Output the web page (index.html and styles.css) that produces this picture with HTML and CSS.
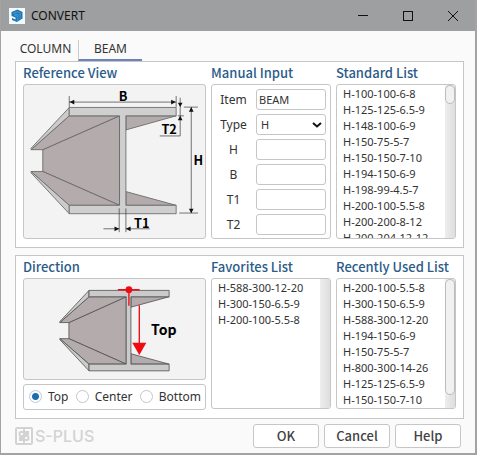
FILE: index.html
```html
<!DOCTYPE html>
<html lang="en">
<head>
<meta charset="utf-8">
<meta name="viewport" content="width=device-width, initial-scale=1">
<title>CONVERT</title>
<link rel="stylesheet" href="styles.css">
</head>
<body>
<div class="window">
  <header class="titlebar">
    <svg class="app-icon" viewBox="0 0 16 16" aria-hidden="true">
      <rect width="16" height="16" fill="#f4f9fc"/>
      <path d="M2.5 4 8.5 1.5 13.5 4V10.5L8 14 3 12V10L6.5 11.5V9.5L2.5 8Z" fill="#1c78b5"/>
      <path d="M4 5.5 8.5 3.8 11.2 5V10.5M5 7 8.8 8.5V13M6 5.8 10 7.4" fill="none" stroke="#6fb0d8" stroke-width=".6"/>
    </svg>
    <h1 class="window-title">CONVERT</h1>
    <button class="win-btn" type="button" aria-label="Minimize"><svg viewBox="0 0 12 12"><path d="M1 5.5H11" /></svg></button>
    <button class="win-btn" type="button" aria-label="Maximize"><svg viewBox="0 0 12 12"><rect x="1.5" y="1.5" width="9" height="9"/></svg></button>
    <button class="win-btn" type="button" aria-label="Close"><svg viewBox="0 0 12 12"><path d="M1 1 11 11M11 1 1 11"/></svg></button>
  </header>

  <main class="content">
    <nav class="tabs">
      <button class="tab" type="button">COLUMN</button>
      <button class="tab tab-active" type="button">BEAM</button>
    </nav>

    <section class="panel">
      <div class="column">
        <h2>Reference View</h2>
        <div class="box picture">
          <svg viewBox="27 30 540 457" role="img" aria-label="H beam dimensions">
            <g stroke="#666" stroke-width="2.5" stroke-linejoin="round">
              <path d="M83 223 312 122V389L83 288Z" fill="#b4abac"/>
              <path d="M162 122H312L83 223H48Z" fill="#b4abac"/>
              <path d="M162 389H312L83 288H48Z" fill="#b4abac"/>
              <path d="M162 97V122L48 223V219Z" fill="#cbcbcb"/>
              <path d="M162 414V389L48 288V292Z" fill="#cbcbcb"/>
              <path d="M331 122H481L331 164Z" fill="#b4abac"/>
              <path d="M331 389H481L331 348Z" fill="#b4abac"/>
              <path d="M162 97H481V122H331V389H481V414H162V389H312V122H162Z" fill="#cfcfcf"/>
            </g>
            <g stroke="#333" stroke-width="2" fill="none">
              <path d="M162 63V96M481 63V96M162 81H481M493 68V182H432M486 122H504M504 96H546M526 96V412M490 412H546M311 398V469M331 398V469M264 459H311M331 459H402"/>
            </g>
            <g fill="#111">
              <path d="M163 81 177 74V88ZM480 81 466 74V88ZM493 96 486 83H500ZM493 122 486 135H500ZM526 96 519 110H533ZM526 413 519 399H533ZM311 459 297 452V466ZM331 459 345 452V466Z"/>
            </g>
            <g class="dimension">
              <text x="310" y="78">B</text>
              <text x="437" y="175">T2</text>
              <text x="533" y="269">H</text>
              <text x="355" y="456">T1</text>
            </g>
          </svg>
        </div>
      </div>

      <div class="column">
        <h2>Manual Input</h2>
        <form class="box fields">
          <label for="item">Item</label><input id="item" type="text" value="BEAM">
          <label for="type">Type</label>
          <div class="select-wrap">
            <select id="type"><option>H</option></select>
            <svg viewBox="0 0 10 6" aria-hidden="true"><path d="M1 1 5 4.5 9 1"/></svg>
          </div>
          <label for="h">H</label><input id="h" type="text">
          <label for="b">B</label><input id="b" type="text">
          <label for="t1">T1</label><input id="t1" type="text">
          <label for="t2">T2</label><input id="t2" type="text">
        </form>
      </div>

      <div class="column">
        <h2><label for="standard">Standard List</label></h2>
        <div class="box list list-tall">
          <select id="standard" size="9">
            <option>H-100-100-6-8</option>
            <option>H-125-125-6.5-9</option>
            <option>H-148-100-6-9</option>
            <option>H-150-75-5-7</option>
            <option>H-150-150-7-10</option>
            <option>H-194-150-6-9</option>
            <option>H-198-99-4.5-7</option>
            <option>H-200-100-5.5-8</option>
            <option>H-200-200-8-12</option>
            <option>H-200-204-12-12</option>
          </select>
          <div class="track"><div class="thumb thumb-short"></div></div>
        </div>
      </div>
    </section>

    <section class="panel">
      <div class="column">
        <h2>Direction</h2>
        <div class="box picture">
          <svg viewBox="42 87 540 297" role="img" aria-label="Top direction">
            <g stroke="#555" stroke-width="2.5" stroke-linejoin="round">
              <path d="M176 217 347 140V341L176 265Z" fill="#b4abac"/>
              <path d="M236 140H347L176 217H149Z" fill="#b4abac"/>
              <path d="M236 341H347L176 265H149Z" fill="#b4abac"/>
              <path d="M236 121V140L149 217V214Z" fill="#cbcbcb"/>
              <path d="M236 361V341L149 265V268Z" fill="#cbcbcb"/>
              <path d="M361 140H475L361 171Z" fill="#b4abac"/>
              <path d="M361 341H475L361 310Z" fill="#b4abac"/>
              <path d="M236 121H475V140H361V341H475V361H236V341H347V140H236Z" fill="#cbcbcb"/>
            </g>
            <path d="M322 119H387M355 119V167M386 165V285" stroke="#f00b12" stroke-width="4" fill="none"/>
            <circle cx="355" cy="119" r="10" fill="#f00b12"/>
            <path d="M365 277H407L386 314Z" fill="#f00b12"/>
            <text class="direction-name" x="421" y="253">Top</text>
          </svg>
        </div>
        <div class="box radios">
          <label><input type="radio" name="direction" checked>Top</label>
          <label><input type="radio" name="direction">Center</label>
          <label><input type="radio" name="direction">Bottom</label>
        </div>
      </div>

      <div class="column">
        <h2><label for="favorites">Favorites List</label></h2>
        <div class="box list">
          <select id="favorites" size="8">
            <option>H-588-300-12-20</option>
            <option>H-300-150-6.5-9</option>
            <option>H-200-100-5.5-8</option>
          </select>
          <div class="track"></div>
        </div>
      </div>

      <div class="column">
        <h2><label for="recent">Recently Used List</label></h2>
        <div class="box list">
          <select id="recent" size="8">
            <option>H-200-100-5.5-8</option>
            <option>H-300-150-6.5-9</option>
            <option>H-588-300-12-20</option>
            <option>H-194-150-6-9</option>
            <option>H-150-75-5-7</option>
            <option>H-800-300-14-26</option>
            <option>H-125-125-6.5-9</option>
            <option>H-150-150-7-10</option>
          </select>
          <div class="track"><div class="thumb thumb-long"></div></div>
        </div>
      </div>
    </section>

    <footer class="footer">
      <div class="brand">
        <svg viewBox="0 0 18 18" aria-hidden="true">
          <rect x="1" y="1" width="16" height="16" rx="1"/>
          <path d="M14 5H6Q4.500 5 4.500 7T6 9H12Q13.500 9 13.500 11T12 13H4M14 7H8M4 11H10M9 1V4M9 14V17"/>
        </svg>
        <span>S-PLUS</span>
      </div>
      <button class="action" type="button">OK</button>
      <button class="action" type="button">Cancel</button>
      <button class="action" type="button">Help</button>
    </footer>
  </main>
</div>
</body>
</html>
```

FILE: styles.css
```css
* {
  box-sizing: border-box;
}

body {
  margin: 0;
  font-family: "Noto Sans", "Open Sans", sans-serif;
  font-size: 12px;
  color: #333;
}

button,
input,
select {
  font: inherit;
  color: inherit;
}

.window {
  display: flex;
  flex-direction: column;
  min-height: 100vh;
  border: solid #a3a3a3;
  border-width: 0 2px 2px 1px;
  background: #fafafa;
}

.titlebar {
  display: flex;
  align-items: center;
  height: 31px;
  padding-left: 8px;
  background: #9d9fa0;
  color: #111;
}

.app-icon {
  width: 16px;
  height: 16px;
}

.window-title {
  flex: 1;
  margin: 0 0 0 6px;
  font-size: 12px;
  font-weight: 400;
}

.win-btn {
  display: flex;
  align-items: center;
  justify-content: center;
  width: 45px;
  height: 31px;
  padding: 0;
  border: 0;
  background: none;
}

.win-btn svg {
  width: 12px;
  height: 12px;
  fill: none;
  stroke: #111;
}

.content {
  display: flex;
  flex-direction: column;
  padding: 9px 11px 5px 14px;
}

.tabs {
  display: flex;
}

.tab {
  width: 63px;
  height: 21px;
  padding: 0 2px 4px 0;
  border: 0;
  background: none;
  line-height: 16px;
}

.tab-active {
  width: 64px;
  padding: 0 0 2px;
  border-left: 1px solid #ccc;
  border-bottom: 2px solid #6b83b8;
}

.panel {
  display: grid;
  grid-template-columns: 183fr 120fr 120fr;
  gap: 5px;
  padding: 2px 7px 8px;
  border: 1px solid #c6c6c6;
  background: #fff;
}

.panel + .panel {
  margin-top: 7px;
}

.column {
  display: flex;
  flex-direction: column;
  min-width: 0;
}

h2 {
  margin: 0;
  padding-bottom: 2px;
  font-family: "Noto Sans CJK KR", "Noto Sans", sans-serif;
  font-size: 13px;
  line-height: 18px;
  font-weight: 500;
  color: #2b5c8a;
  white-space: nowrap;
}

.box {
  border: 1px solid #c6c6c6;
  border-radius: 3px;
  background: #fff;
}

.picture {
  background: #f3f3f3;
}

.picture svg {
  display: block;
  width: 100%;
  font-family: "Noto Sans CJK KR", "Noto Sans", sans-serif;
}

.dimension {
  font-size: 38px;
  font-weight: 700;
}

.direction-name {
  font-size: 42px;
  font-weight: 700;
  fill: #000;
}

.fields {
  display: grid;
  grid-template-columns: 1fr 70px;
  grid-auto-rows: 21px;
  row-gap: 4px;
  align-items: center;
  padding: 4px 4px 3px;
}

.fields label {
  padding-right: 5px;
  text-align: center;
}

.fields input,
.fields select {
  width: 100%;
  height: 21px;
  padding: 0 2px;
  border: 1px solid #c6c6c6;
  border-radius: 3px;
  background: #fff;
  font-size: 11px;
}

.select-wrap {
  display: grid;
  align-items: center;
}

.select-wrap > * {
  grid-area: 1 / 1;
}

.fields select {
  appearance: none;
  padding-left: 4px;
}

.select-wrap svg {
  justify-self: end;
  width: 10px;
  height: 6px;
  margin-right: 4px;
  fill: none;
  stroke: #111;
  stroke-width: 2;
  pointer-events: none;
}

.list {
  display: flex;
  height: 131px;
  overflow: hidden;
}

.list-tall {
  height: 155px;
}

.list select {
  flex: 1;
  min-width: 0;
  height: 100%;
  padding: 1px 0 0;
  border: 0;
  outline: 0;
  background: none;
  scrollbar-width: none;
  font-size: 11px;
}

.list option {
  height: 16px;
  min-height: 16px;
  padding: 0 0 0 6px;
  line-height: 16px;
}

.track {
  width: 10px;
  background: linear-gradient(90deg, #ededed, #dedede);
}

.thumb {
  border: 1px solid #bbb;
  border-radius: 5px;
  background: #f1f1f1;
}

.thumb-short {
  height: 19px;
}

.thumb-long {
  height: 116px;
}

.radios {
  display: flex;
  align-items: center;
  justify-content: space-between;
  height: 26px;
  margin-top: 4px;
  padding: 0 4px 0 5px;
}

.radios label {
  display: flex;
  align-items: center;
  gap: 6px;
}

.radios input {
  appearance: none;
  width: 13px;
  height: 13px;
  margin: 0;
  border: 1px solid #c6c6c6;
  border-radius: 50%;
  background: #fff;
}

.radios input:checked {
  border-color: #b5cce0;
  background: radial-gradient(circle, #1a6eae 3px, #fff 4px);
}

.footer {
  display: flex;
  align-items: center;
  gap: 5px;
  padding: 5px 3px 0 0;
}

.brand {
  display: flex;
  flex: 1;
  align-items: center;
  gap: 2px;
  color: #d3d3d3;
  font-family: Inter, sans-serif;
  font-size: 16px;
  font-weight: 500;
}

.brand svg {
  width: 18px;
  height: 18px;
  fill: none;
  stroke: #d3d3d3;
  stroke-width: 2;
}

.action {
  width: 66px;
  height: 24px;
  padding: 0;
  border: 1px solid #c6c6c6;
  border-radius: 3px;
  background: #fff;
  color: #444;
  font-family: "Noto Sans CJK KR", "Noto Sans", sans-serif;
  font-size: 13px;
  font-weight: 500;
  line-height: 20px;
}
```
